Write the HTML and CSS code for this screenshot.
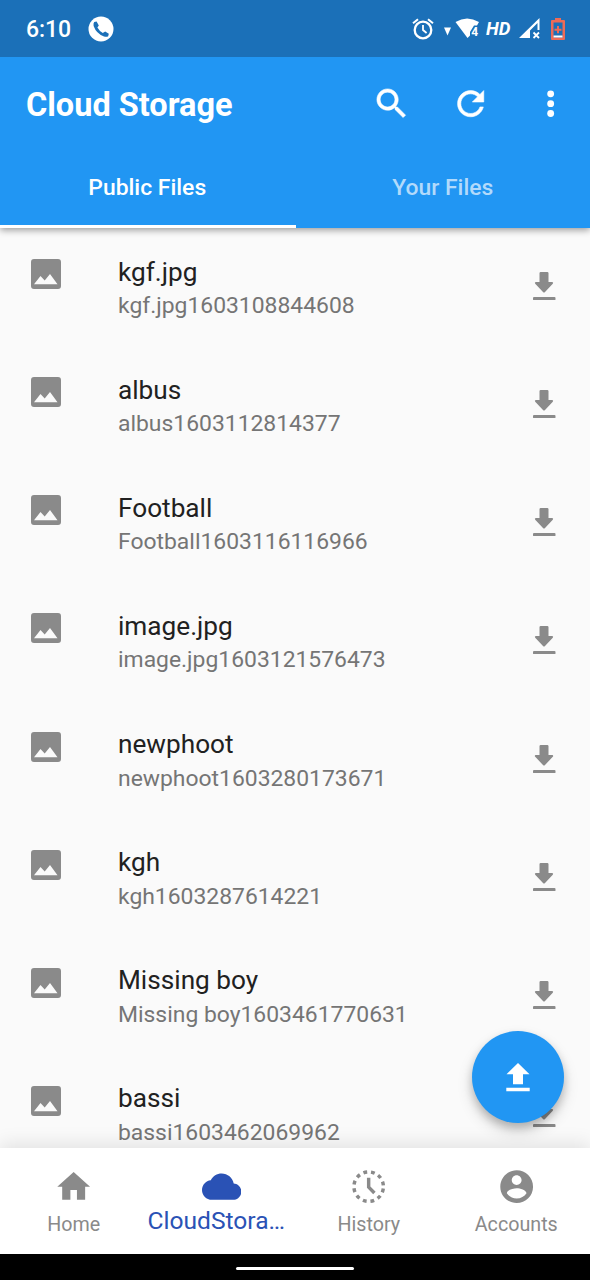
FILE: index.html
```html
<!DOCTYPE html>
<html lang="en">
<head>
<meta charset="utf-8">
<title>Cloud Storage</title>
<link rel="stylesheet" href="styles.css">
</head>
<body>
<svg class="defs" aria-hidden="true">
  <symbol id="picture" viewBox="0 0 30 30"><path fill-rule="evenodd" d="M3 0H27Q30 0 30 3V27Q30 30 27 30H3Q0 30 0 27V3Q0 0 3 0ZM3 25.300H26.500L19 15L13.700 21.500L9.500 17Z"/></symbol>
  <symbol id="download" viewBox="0 0 24 28"><path d="M7.700 0H14.300Q15.500 0 15.500 1.200V10H19.300Q20.800 10.500 19.800 11.800L12 20Q11 21 10 20L2.200 11.800Q1.200 10.500 2.700 10H6.500V1.200Q6.500 0 7.700 0Z"/><rect x="0" y="25" width="22.500" height="3.200" rx="1"/></symbol>
</svg>
<div class="phone">
  <header class="status">
    <span class="time">6:10</span>
    <svg class="call" viewBox="0 0 26 26"><circle cx="13" cy="13" r="12.5" fill="#fff"/><path fill="#1b70b8" d="M6.200 6.100 8.600 5.500 10.800 9.400 9.400 11.600Q11.200 15 14.800 17L17.200 15.600 20.800 17.800 20.200 20.200Q18.700 21.300 16 20.500 8.400 17.700 5.600 10 5.200 7.300 6.200 6.100Z"/></svg>
    <div class="status-icons">
      <svg class="alarm" viewBox="0 0 22 22" fill="none" stroke="#fff"><circle cx="11" cy="12" r="8.3" stroke-width="2.3"/><path d="M11 7V12L14.6 15" stroke-width="1.8"/><path d="M1 5.3 6 1.2M16 1.2 21 5.3" stroke-width="2"/></svg>
      <svg class="wifi" viewBox="0 0 36 22"><path fill="#fff" d="M0 9.5H7L3.500 17.500ZM11.500 4Q23 -3 35 4L33 7.500H30L26 14V17.500L23.500 20Z"/><text x="27.300" y="17.600">4</text></svg>
      <span class="hd">HD</span>
      <svg class="signal" viewBox="0 0 22 22"><path fill="#fff" fill-rule="evenodd" d="M0 20 20.500 0V12H18.500V5L11 12.500V20Z"/><path d="M14.500 14.500 20 20M20 14.500 14.500 20" stroke="#fff" stroke-width="1.8"/></svg>
      <svg class="battery" viewBox="0 0 14 22"><path fill="#ee6b57" fill-rule="evenodd" d="M4 0H10V2H13Q14 2 14 3V21Q14 22 13 22H1Q0 22 0 21V3Q0 2 1 2H4ZM2.500 4.500V19.500H11.500V4.500ZM6 8H8V10.700H10.500V12.700H8V15.300H6V12.700H3.500V10.700H6Z"/><path d="M2.500 17.500H11.500V19.500H2.500Z" fill="#fff"/></svg>
    </div>
  </header>
  <div class="appbar">
    <div class="toolbar">
      <h1>Cloud Storage</h1>
      <svg class="icon tool" viewBox="0 0 24 24"><path d="M15.5 14h-.79l-.28-.27C15.41 12.59 16 11.11 16 9.5 16 5.91 13.09 3 9.5 3S3 5.91 3 9.5 5.91 16 9.5 16c1.61 0 3.09-.59 4.23-1.57l.27.28v.79l5 4.99L20.49 19l-4.99-5zm-6 0C7.01 14 5 11.99 5 9.5S7.01 5 9.5 5 14 7.01 14 9.5 11.99 14 9.5 14z"/></svg>
      <svg class="icon tool" viewBox="0 0 24 24"><path d="M17.65 6.35C16.2 4.9 14.21 4 12 4c-4.42 0-7.99 3.58-7.99 8s3.57 8 7.99 8c3.73 0 6.84-2.55 7.73-6h-2.08c-.82 2.33-3.04 4-5.65 4-3.31 0-6-2.69-6-6s2.69-6 6-6c1.66 0 3.14.69 4.22 1.78L13 11h7V4l-2.35 2.35z"/></svg>
      <svg class="icon" viewBox="0 0 24 24"><circle cx="12" cy="6" r="2.1"/><circle cx="12" cy="12" r="2.1"/><circle cx="12" cy="18" r="2.1"/></svg>
    </div>
    <nav class="tabs"><span class="tab active">Public Files</span><span class="tab">Your Files</span></nav>
  </div>
  <main class="list">
    <div class="row"><svg class="pic"><use href="#picture"/></svg><div class="names"><div class="title">kgf.jpg</div><div class="sub">kgf.jpg1603108844608</div></div><svg class="get"><use href="#download"/></svg></div>
    <div class="row"><svg class="pic"><use href="#picture"/></svg><div class="names"><div class="title">albus</div><div class="sub">albus1603112814377</div></div><svg class="get"><use href="#download"/></svg></div>
    <div class="row"><svg class="pic"><use href="#picture"/></svg><div class="names"><div class="title">Football</div><div class="sub">Football1603116116966</div></div><svg class="get"><use href="#download"/></svg></div>
    <div class="row"><svg class="pic"><use href="#picture"/></svg><div class="names"><div class="title">image.jpg</div><div class="sub">image.jpg1603121576473</div></div><svg class="get"><use href="#download"/></svg></div>
    <div class="row"><svg class="pic"><use href="#picture"/></svg><div class="names"><div class="title">newphoot</div><div class="sub">newphoot1603280173671</div></div><svg class="get"><use href="#download"/></svg></div>
    <div class="row"><svg class="pic"><use href="#picture"/></svg><div class="names"><div class="title">kgh</div><div class="sub">kgh1603287614221</div></div><svg class="get"><use href="#download"/></svg></div>
    <div class="row"><svg class="pic"><use href="#picture"/></svg><div class="names"><div class="title">Missing boy</div><div class="sub">Missing boy1603461770631</div></div><svg class="get"><use href="#download"/></svg></div>
    <div class="row"><svg class="pic"><use href="#picture"/></svg><div class="names"><div class="title">bassi</div><div class="sub">bassi1603462069962</div></div><svg class="get"><use href="#download"/></svg></div>
  </main>
  <button class="fab" aria-label="Upload"><svg viewBox="0 0 24 28"><path d="M12 0 23.500 11.300H17V21.300H7V11.300H.5ZM.3 24.700H23.700V28.200H.3Z"/></svg></button>
  <nav class="bottom">
    <div class="item"><svg class="icon" viewBox="0 0 24 24"><path d="M10 20v-6h4v6h5v-8h3L12 3 2 12h3v8z"/></svg><span>Home</span></div>
    <div class="item current"><svg class="icon" viewBox="0 0 24 24"><path d="M19.35 10.04C18.67 6.59 15.64 4 12 4 9.11 4 6.6 5.64 5.35 8.04 2.34 8.36 0 10.91 0 14c0 3.31 2.69 6 6 6h13c2.76 0 5-2.24 5-5 0-2.64-2.05-4.78-4.65-4.96z"/></svg><span>CloudStora…</span></div>
    <div class="item"><svg class="icon" viewBox="0 0 24 24"><circle cx="12" cy="12" r="9" fill="none" stroke="currentColor" stroke-width="2.1" stroke-dasharray="2.3 2.412" stroke-dashoffset="-1.2"/><path d="M12 6.600V12.300L15.500 15.900" fill="none" stroke="currentColor" stroke-width="2.1"/></svg><span>History</span></div>
    <div class="item"><svg class="icon" viewBox="0 0 24 24"><path d="M12 2C6.48 2 2 6.48 2 12s4.480 10 10 10 10-4.480 10-10S17.520 2 12 2zm0 3c1.660 0 3 1.340 3 3s-1.340 3-3 3-3-1.340-3-3 1.340-3 3-3zm0 14.200c-2.500 0-4.710-1.280-6-3.220.03-1.990 4-3.080 6-3.080 1.990 0 5.970 1.090 6 3.080-1.290 1.940-3.500 3.220-6 3.220z"/></svg><span>Accounts</span></div>
  </nav>
  <footer class="gesture"><div class="pill"></div></footer>
</div>
</body>
</html>
```
FILE: styles.css
```css
* { box-sizing: border-box; }
body { margin: 0; font-family: Roboto, sans-serif; background: #fafafa; }
.defs { position: absolute; width: 0; height: 0; }
.phone { position: relative; width: 590px; height: 1280px; display: flex; flex-direction: column; overflow: hidden; }
.status { position: relative; z-index: 2; height: 57px; flex: none; background: #1b70b8; color: #fff; display: flex; align-items: center; padding: 0 25px 0 26px; }
.time { font-size: 23px; line-height: 28px; font-weight: 500; letter-spacing: -.1px; padding-top: 3px; width: 62px; }
.call { width: 26px; height: 26px; }
.status-icons { margin-left: auto; display: flex; align-items: center; }
.alarm { width: 22px; height: 22px; margin-right: 10px; }
.wifi { width: 36px; height: 22px; margin-right: 6px; }
.wifi text { font: 700 12px Roboto, sans-serif; fill: #fff; }
.hd { font: italic 700 18.5px/22px Roboto, sans-serif; width: 33px; }
.signal { width: 22px; height: 22px; margin-right: 10px; }
.battery { width: 14px; height: 22px; }
.appbar { height: 171px; flex: none; background: #2196f3; color: #fff; position: relative; z-index: 1; box-shadow: 0 2px 7px rgba(0,0,0,.4); }
.toolbar { height: 94px; display: flex; align-items: center; padding: 0 20px 0 26px; gap: 40px; }
.tool { stroke: currentColor; stroke-width: .35; }
h1 { margin: 0 auto 0 0; font-size: 32.5px; line-height: 40px; font-weight: 700; padding-top: 1px; }
.icon { width: 39.33px; height: 39.33px; fill: currentColor; flex: none; display: block; }
.tabs { display: flex; height: 77px; }
.tab { flex: 1; display: flex; align-items: center; justify-content: center; font-size: 22.9px; font-weight: 500; color: #b2dafb; border-bottom: 3px solid transparent; padding-bottom: 2px; }
.tab.active { color: #fff; border-color: #fff; padding-right: 1px; }
.list { height: 920px; flex: none; overflow: hidden; background: #fafafa; }
.row { height: 118.14px; display: flex; padding: 0 33px 0 31px; }
.pic { width: 30px; height: 30px; margin: 31px 57px 0 0; fill: #8a8a8a; flex: none; }
.names { flex: 1; padding-top: 27.5px; white-space: nowrap; }
.title { font-size: 26.2px; line-height: 32px; color: #212121; }
.sub { font-size: 22.9px; line-height: 28px; margin-top: 4.5px; color: #757575; }
.get { width: 24px; height: 28px; margin-top: 44px; fill: #8a8a8a; flex: none; overflow: visible; }
.fab { position: absolute; left: 472px; top: 1030.5px; width: 92px; height: 92px; border: 0; border-radius: 50%; background: #2196f3; display: grid; place-items: center; padding: 0; box-shadow: 0 5px 8px rgba(0,0,0,.2), 0 8px 16px rgba(0,0,0,.14); }
.fab svg { width: 24px; height: 28px; fill: #fff; overflow: visible; }
.bottom { position: relative; height: 106px; flex: none; background: #fff; display: flex; box-shadow: 0 -4px 18px rgba(0,0,0,.1); color: #8a8a8a; }
.item { flex: 1; display: flex; flex-direction: column; align-items: center; padding-top: 19px; font-size: 19.7px; }
.item span { line-height: 24px; margin-top: 7px; }
.current { color: #2a52b5; font-size: 24.6px; }
.item.current span { margin-right: 10px; margin-top: 3px; }
.gesture { height: 26px; flex: none; background: #000; display: flex; justify-content: center; position: relative; }
.pill { width: 118px; height: 3px; background: #fff; margin-top: 13px; border-radius: 2px; }
```
